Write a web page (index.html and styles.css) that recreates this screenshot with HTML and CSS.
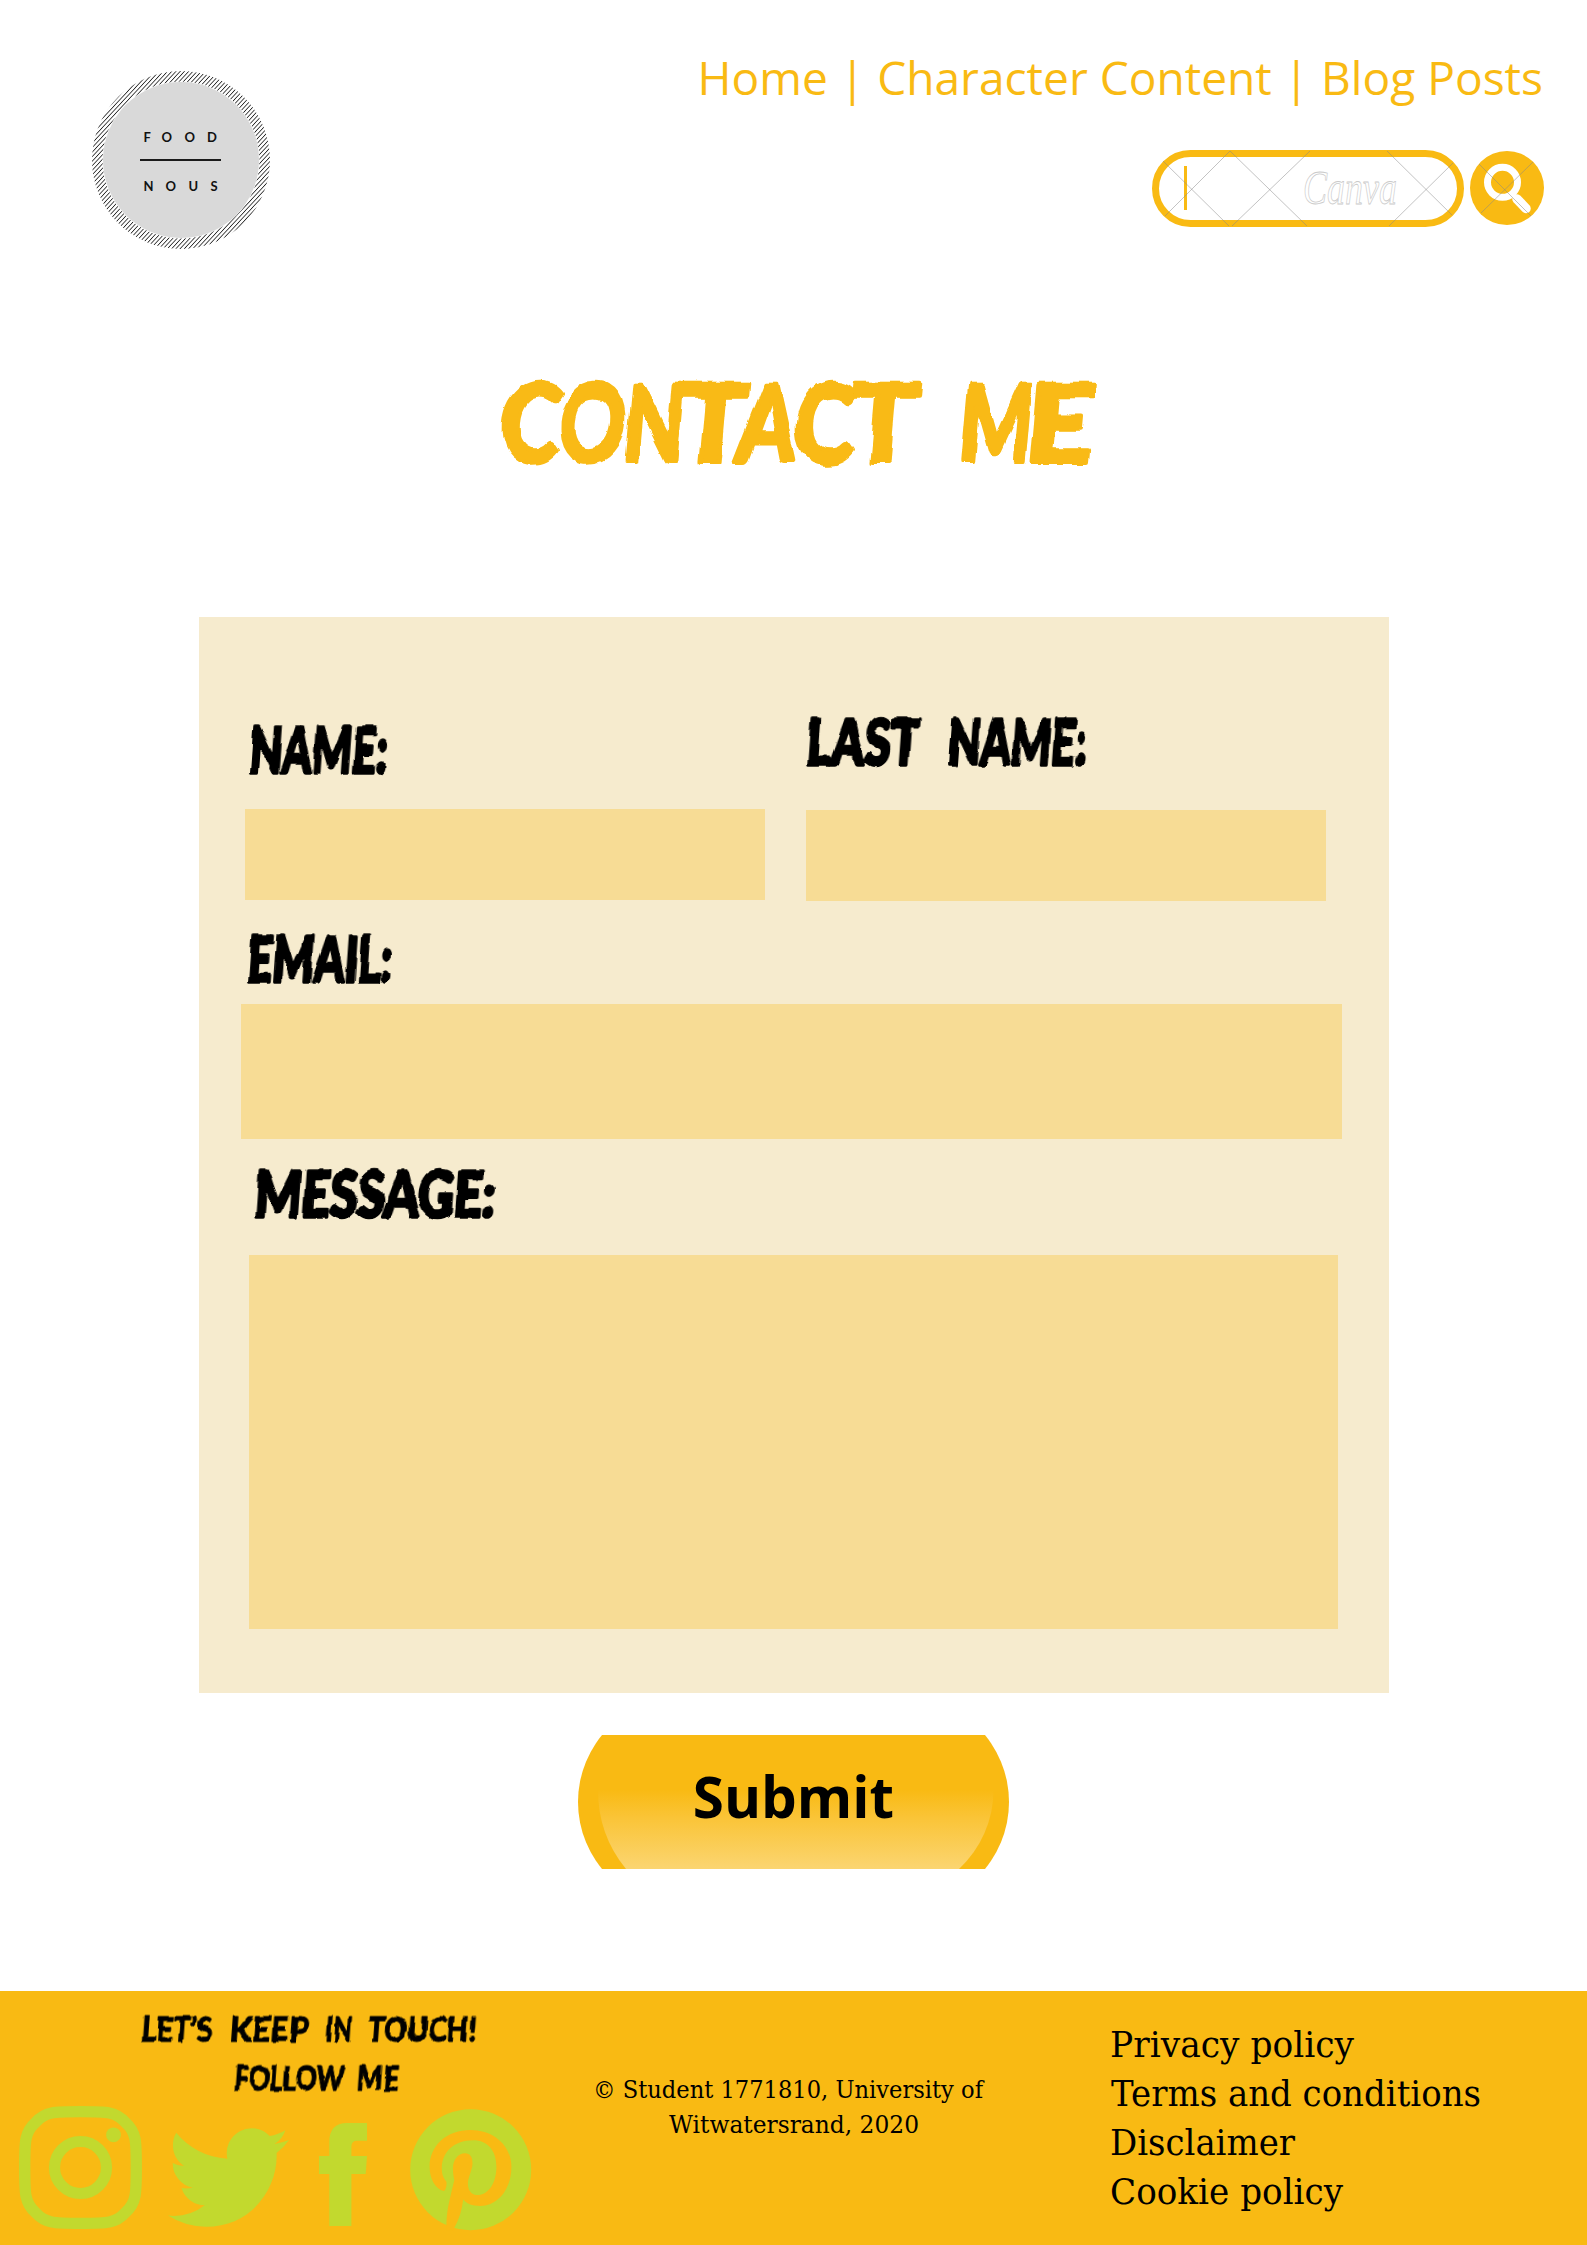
FILE: index.html
```html
<!DOCTYPE html>
<html lang="en">
<head>
<meta charset="utf-8">
<title>Food Nous - Contact Me</title>
<link rel="stylesheet" href="styles.css">
</head>
<body>
<div class="page">
  <header class="header">
    <svg class="logo" width="180" height="180" viewBox="0 0 180 180">
      <defs>
        <pattern id="hatch" width="3.1" height="8" patternUnits="userSpaceOnUse" patternTransform="rotate(43)">
          <rect width=".8" height="8" fill="#222"/>
        </pattern>
      </defs>
      <circle cx="90" cy="89" r="89" fill="url(#hatch)"/>
      <circle cx="90" cy="89" r="78.500" fill="#fff"/>
      <circle cx="90" cy="89" r="78" fill="#d9d9d9"/>
      <g class="logo-text">
        <text y="70.500" x="52.500 70.500 93.500 116">FOOD</text>
        <text y="119.500" x="52.500 74.500 97.500 119.500">NOUS</text>
      </g>
      <rect x="49" y="88" width="81" height="2" fill="#1b1b1b"/>
    </svg>
    <div class="header-right">
      <nav class="nav"><a>Home</a> | <a>Character Content</a> | <a>Blog Posts</a></nav>
      <svg class="search" width="393" height="78" viewBox="0 0 393 78">
        <rect x="3.500" y="3.500" width="305" height="70" rx="35" fill="#fff" stroke="#f9ba13" stroke-width="7"/>
        <rect x="32" y="16" width="3" height="44" fill="#f9ba13"/>
        <circle cx="355" cy="38" r="37" fill="#f9ba13"/>
        <path d="M365 49 374 58.500" stroke="#fff" stroke-width="9.500" stroke-linecap="round"/>
        <circle cx="350.500" cy="32.300" r="15" fill="none" stroke="#fff" stroke-width="7"/>
        <g fill="none" stroke="#888" stroke-opacity=".5">
          <path d="M11 11 77 76M13 66 78 1 155 76M80 76 158 1M235 1 300 65M237 76 301 13M327 14 379 66M329 63 381 12"/>
        </g>
        <text class="watermark" x="151" y="54" textLength="94" lengthAdjust="spacingAndGlyphs">Canva</text>
      </svg>
    </div>
  </header>

  <h1 class="title">
    <svg class="brush" width="590" height="78">
      <defs>
        <filter id="rough" x="-5%" y="-15%" width="110%" height="130%">
          <feTurbulence type="fractalNoise" baseFrequency=".04 .02" numOctaves="3" seed="4" result="n"/>
          <feDisplacementMap in="SourceGraphic" in2="n" scale="9" xChannelSelector="R" yChannelSelector="G"/>
        </filter>
        <filter id="rough-small" x="-5%" y="-15%" width="110%" height="130%">
          <feTurbulence type="fractalNoise" baseFrequency=".08 .04" numOctaves="2" seed="7" result="n"/>
          <feDisplacementMap in="SourceGraphic" in2="n" scale="5" xChannelSelector="R" yChannelSelector="G"/>
        </filter>
      </defs>
      <g filter="url(#rough)"><g transform="translate(0 75) skewX(-5)">
        <text><tspan x="-4" textLength="59" lengthAdjust="spacingAndGlyphs">C</tspan><tspan x="53" textLength="68" lengthAdjust="spacingAndGlyphs">O</tspan><tspan x="118" textLength="62" lengthAdjust="spacingAndGlyphs">N</tspan><tspan x="174" textLength="68" lengthAdjust="spacingAndGlyphs">T</tspan><tspan x="233" textLength="59" lengthAdjust="spacingAndGlyphs">A</tspan><tspan x="289" textLength="60" lengthAdjust="spacingAndGlyphs">C</tspan><tspan x="345" textLength="68" lengthAdjust="spacingAndGlyphs">T</tspan></text>
        <text><tspan x="456" textLength="72" lengthAdjust="spacingAndGlyphs">M</tspan><tspan x="522" textLength="66" lengthAdjust="spacingAndGlyphs">E</tspan></text>
      </g></g>
    </svg>
  </h1>

  <form class="panel">
    <div class="row">
      <label class="field field-name">
        <svg class="brush small" width="140" height="46"><g transform="translate(-2 46) skewX(-4)"><text textLength="138" lengthAdjust="spacingAndGlyphs">NAME:</text></g></svg>
        <input class="box" type="text">
      </label>
      <label class="field field-last">
        <svg class="brush small" width="282" height="46"><g transform="translate(-2 46) skewX(-4)"><text textLength="113" lengthAdjust="spacingAndGlyphs">LAST</text><text x="142" textLength="138" lengthAdjust="spacingAndGlyphs">NAME:</text></g></svg>
        <input class="box" type="text">
      </label>
    </div>
    <label class="field field-email">
      <svg class="brush small" width="146" height="46"><g transform="translate(-2 46) skewX(-4)"><text textLength="145" lengthAdjust="spacingAndGlyphs">EMAIL:</text></g></svg>
      <input class="box" type="email">
    </label>
    <label class="field field-message">
      <svg class="brush small" width="242" height="46"><g transform="translate(-3 46) skewX(-4)"><text textLength="241" lengthAdjust="spacingAndGlyphs">MESSAGE:</text></g></svg>
      <textarea class="box"></textarea>
    </label>
  </form>

  <button class="submit" type="submit">
    <svg class="submit-shape" width="431" height="134" viewBox="0 0 431 134">
      <defs>
        <linearGradient id="shine" gradientUnits="userSpaceOnUse" x1="0" y1="55" x2="0" y2="134">
          <stop offset="0" stop-color="#f9ba13"/>
          <stop offset=".35" stop-color="#fac437"/>
          <stop offset="1" stop-color="#fbd571"/>
        </linearGradient>
      </defs>
      <rect y="-38.500" width="431" height="211" rx="105.500" fill="#f9ba13"/>
      <path fill="url(#shine)" d="M20 55A125 125 0 0 0 48 134H381A108 108 0 0 0 415.500 55Z"/>
    </svg>
    <span class="submit-text">Submit</span>
  </button>

  <footer class="footer">
    <section class="touch">
      <svg class="brush tiny" width="340" height="25"><g transform="translate(-2 25.500) skewX(-4)"><text textLength="72" lengthAdjust="spacingAndGlyphs">LET’S</text><text x="89" textLength="79" lengthAdjust="spacingAndGlyphs">KEEP</text><text x="185" textLength="27" lengthAdjust="spacingAndGlyphs">IN</text><text x="227" textLength="109" lengthAdjust="spacingAndGlyphs">TOUCH!</text></g></svg>
      <svg class="brush tiny second" width="170" height="25"><g transform="translate(-2 25.500) skewX(-4)"><text textLength="110" lengthAdjust="spacingAndGlyphs">FOLLOW</text><text x="123" textLength="42" lengthAdjust="spacingAndGlyphs">ME</text></g></svg>
      <div class="social">
        <svg width="123" height="123" viewBox="0 0 123 123">
          <path fill="none" stroke="#c2d92e" stroke-width="11.300" d="M61.500 5.700C88 5.700 97 5.700 106.500 16.500 117.300 26 117.300 35 117.300 61.500S117.300 97 106.500 106.500C97 117.300 88 117.300 61.500 117.300S26 117.300 16.500 106.500C5.700 97 5.700 88 5.700 61.500S5.700 26 16.500 16.500C26 5.700 35 5.700 61.500 5.700Z"/>
          <circle cx="61.500" cy="61.500" r="26" fill="none" stroke="#c2d92e" stroke-width="11.200"/>
          <circle cx="94.500" cy="28.800" r="7.400" fill="#c2d92e"/>
        </svg>
        <svg class="twitter" width="121" height="99" viewBox="0 2.200 24 19.600" preserveAspectRatio="none">
          <path fill="#c2d92e" d="M23.953 4.570a10 10 0 01-2.825.775 4.958 4.958 0 002.163-2.723c-.951.555-2.005.959-3.127 1.184a4.920 4.920 0 00-8.384 4.482C7.690 8.095 4.067 6.130 1.640 3.162a4.822 4.822 0 00-.666 2.475c0 1.710.870 3.213 2.188 4.096a4.904 4.904 0 01-2.228-.616v.060a4.923 4.923 0 003.946 4.827 4.996 4.996 0 01-2.212.085 4.936 4.936 0 004.604 3.417 9.867 9.867 0 01-6.102 2.105c-.390 0-.779-.023-1.170-.067a13.995 13.995 0 007.557 2.209c9.053 0 13.998-7.496 13.998-13.985 0-.210 0-.420-.015-.630A9.935 9.935 0 0024 4.590z"/>
        </svg>
        <svg class="facebook" width="48" height="103" viewBox="0 0 48 103">
          <path fill="#c2d92e" d="M48 0V17.700H38Q32.400 17.700 32.400 23.500V33H48L46.700 51H32.400V103H10.300V51H0V33H10.300V19Q10.300 0 28 0Z"/>
        </svg>
        <svg class="pinterest" width="122" height="122" viewBox="0 0 122 122">
          <circle cx="60.700" cy="60.700" r="60.500" fill="#c2d92e"/>
          <path fill="#f9ba13" d="M36.400 116.700C36.400 100 41 86 44.300 71 43.600 68 42.900 64 42.900 59.300 43 51 48 44.300 55 44.300 60 44.300 62.500 48 62.500 54.300 62.500 61 58 68 57.900 74.300 57.900 81 61 86 66.800 86 80 86 86.400 72 86.400 57.700 86.400 42 78 31.300 63.200 31.300 43 31.300 31.800 44 31.800 59.300 31.800 66 33.500 69 36.400 72.700 37 76 36 81 33.900 82 25 80 19.600 69 19.600 57.700 19.600 38 35 21 60.700 21 84 21 101.400 37 101.400 57.700 101.400 80 88 97 70.400 97 62 97 56 94.500 53.200 90.300 52 101 49 111 43.900 119.500L43 122 36 121Z"/>
        </svg>
      </div>
    </section>
    <p class="copyright">
      <svg class="slab" width="390" height="18"><text x="-1" y="18" textLength="390" lengthAdjust="spacingAndGlyphs">© Student 1771810, University of</text></svg>
      <svg class="slab" width="250" height="18"><text x="5" y="18" textLength="250" lengthAdjust="spacingAndGlyphs">Witwatersrand, 2020</text></svg>
    </p>
    <nav class="links">
      <svg class="slab" width="243" height="25"><text x="-1" y="25" textLength="244" lengthAdjust="spacingAndGlyphs">Privacy policy</text></svg>
      <svg class="slab" width="370" height="25"><text y="25" textLength="370" lengthAdjust="spacingAndGlyphs">Terms and conditions</text></svg>
      <svg class="slab" width="184" height="25"><text x="-1" y="25" textLength="185" lengthAdjust="spacingAndGlyphs">Disclaimer</text></svg>
      <svg class="slab" width="232" height="25"><text x="-1" y="25" textLength="233" lengthAdjust="spacingAndGlyphs">Cookie policy</text></svg>
    </nav>
  </footer>
</div>
</body>
</html>
```
FILE: styles.css
```css
* { box-sizing: border-box; }
body { margin: 0; background: #fff; }
svg { display: block; flex: none; }
.page { width: 1587px; height: 2245px; display: flex; flex-direction: column; overflow: hidden; }

.header { height: 387px; padding: 0 42px 0 91px; display: flex; justify-content: space-between; }
.logo { margin-top: 71px; }
.logo-text { font: 700 13px "Lato", sans-serif; fill: #111; }
.header-right { display: flex; flex-direction: column; align-items: flex-end; padding-top: 46px; }
.nav { font: 400 46.100px/64px "Open Sans", sans-serif; color: #f9ba13; white-space: nowrap; margin-right: 2px; }
.search { margin-top: 40px; }
.watermark { font: italic 48px "Liberation Serif", serif; fill: #fff; stroke: #cacaca; stroke-width: .8px; }

.brush { overflow: visible; font: 900 108px "Lato", sans-serif; fill: #f9ba13; stroke: #f9ba13; stroke-width: 4px; stroke-linejoin: round; }
.brush.small { font-size: 62px; fill: #000; stroke: #000; stroke-width: 3.500px; }
.brush.tiny { font-size: 34px; fill: #000; stroke: #000; stroke-width: 1px; }
.brush.small > g, .brush.tiny > g { filter: url(#rough-small); }
.title { margin: 0 0 0 502px; height: 230px; }

.panel { width: 1190px; height: 1076px; margin-left: 199px; background: #f6ebce; }
.row { display: flex; gap: 41px; padding-left: 46px; }
.field { display: flex; flex-direction: column; }
.box { display: block; border: 0; padding: 0; background: #f7dc95; width: 520px; height: 91px; resize: none; outline: 0; border-radius: 0; }
.field-name { padding-top: 110px; }
.field-name .brush { margin: 0 0 36px 5px; }
.field-last { padding-top: 102px; }
.field-last .brush { margin: 0 0 45px 1px; }
.field-email { padding: 35px 0 0 42px; }
.field-email .brush { margin: 0 0 22px 7px; }
.field-email .box { width: 1101px; height: 135px; }
.field-message { padding: 32px 0 0 50px; }
.field-message .brush { margin: 0 0 38px 7px; }
.field-message .box { width: 1089px; height: 374px; }

.submit { display: grid; width: 431px; height: 134px; margin: 42px 0 0 578px; padding: 0; border: 0; background: none; }
.submit-shape, .submit-text { grid-area: 1 / 1; }
.submit-text { font: 700 56.500px/76px "Open Sans", sans-serif; color: #000; padding-top: 24px; text-align: center; }

.footer { margin-top: 122px; height: 254px; background: #f9ba13; display: flex; }
.touch { width: 594px; padding-top: 25px; }
.touch > .brush { margin-left: 142px; }
.touch > .second { margin: 24px 0 0 235px; }
.social { display: flex; padding-left: 19px; margin-top: 16px; }
.twitter { margin: 22px 0 0 26px; }
.facebook { margin: 17px 0 0 30px; }
.pinterest { margin: 3px 0 0 43px; }
.slab { overflow: visible; font: 24.500px "DejaVu Serif", serif; fill: #000; }
.copyright { width: 390px; margin: 0; padding-top: 89px; display: flex; flex-direction: column; align-items: center; gap: 17px; }
.links { margin-left: 127px; padding-top: 41px; display: flex; flex-direction: column; gap: 24px; }
.links .slab { font-size: 34.500px; }
```
